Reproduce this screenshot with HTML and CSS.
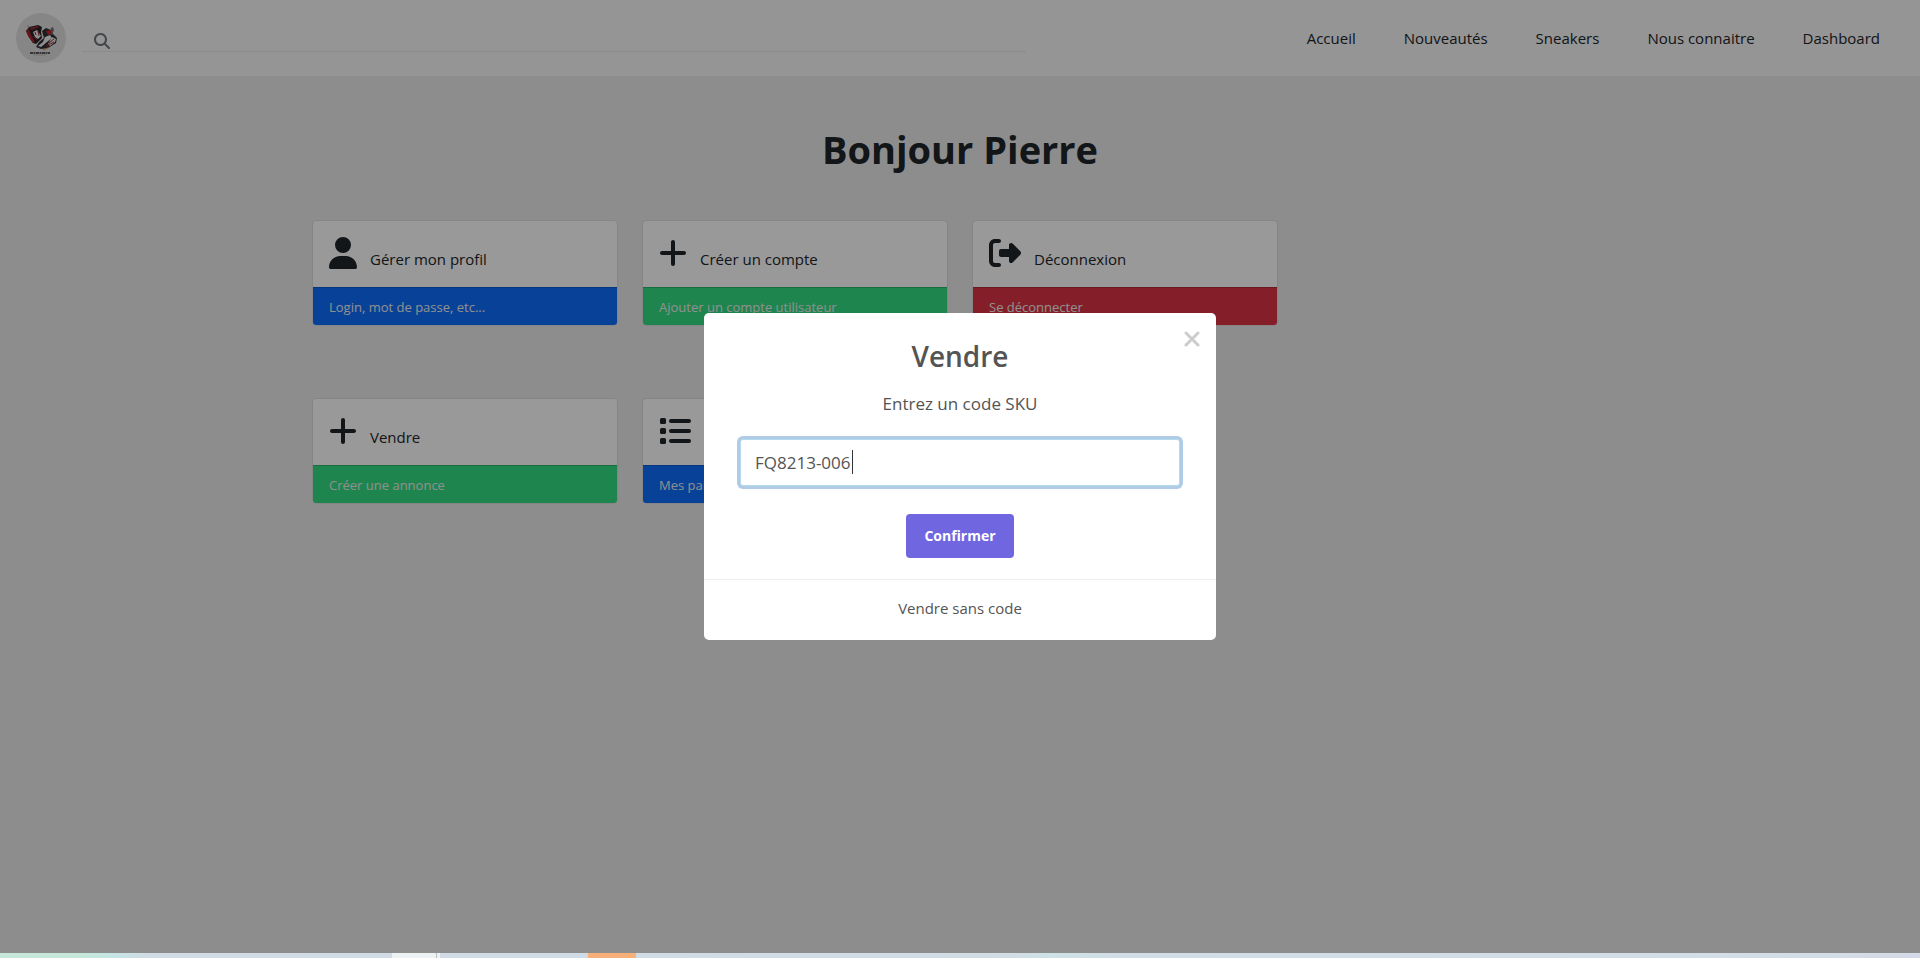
FILE: index.html
```html
<!DOCTYPE html>
<html lang="fr">
<head>
<meta charset="utf-8">
<meta name="viewport" content="width=device-width, initial-scale=1">
<title>Dashboard</title>
<link rel="stylesheet" href="styles.css">
</head>
<body>
<svg width="0" height="0" class="sprite" aria-hidden="true">
  <symbol id="i-user" viewBox="0 0 448 512"><path d="M224 256A128 128 0 1 0 224 0a128 128 0 1 0 0 256zm-45.700 48C79.800 304 0 383.800 0 482.300C0 498.700 13.300 512 29.700 512H418.300c16.400 0 29.700-13.300 29.700-29.700C448 383.800 368.200 304 269.700 304H178.300z"/></symbol>
  <symbol id="i-plus" viewBox="0 0 448 512"><path d="M256 80c0-17.700-14.300-32-32-32s-32 14.300-32 32V224H48c-17.700 0-32 14.300-32 32s14.300 32 32 32H192V432c0 17.700 14.300 32 32 32s32-14.300 32-32V288H400c17.700 0 32-14.300 32-32s-14.300-32-32-32H256V80z"/></symbol>
  <symbol id="i-exit" viewBox="0 0 512 512"><path d="M377.900 105.900L500.700 228.700c7.200 7.200 11.300 17.100 11.300 27.300s-4.100 20.100-11.300 27.300L377.900 406.100c-6.400 6.400-15 9.900-24 9.900c-18.700 0-33.900-15.200-33.900-33.900l0-62.100-128 0c-17.700 0-32-14.300-32-32l0-64c0-17.700 14.300-32 32-32l128 0 0-62.100c0-18.700 15.200-33.900 33.900-33.900c9 0 17.600 3.600 24 9.900zM160 96L96 96c-17.700 0-32 14.300-32 32l0 256c0 17.700 14.300 32 32 32l64 0c17.700 0 32 14.300 32 32s-14.300 32-32 32l-64 0c-53 0-96-43-96-96L0 128C0 75 43 32 96 32l64 0c17.700 0 32 14.300 32 32s-14.300 32-32 32z"/></symbol>
  <symbol id="i-list" viewBox="0 0 512 512"><rect x="16" y="48" width="96" height="96" rx="24"/><rect x="16" y="208" width="96" height="96" rx="24"/><rect x="16" y="368" width="96" height="96" rx="24"/><rect x="160" y="64" width="352" height="64" rx="32"/><rect x="160" y="224" width="352" height="64" rx="32"/><rect x="160" y="384" width="352" height="64" rx="32"/></symbol>
  <symbol id="i-search" viewBox="0 0 512 512"><path d="M416 208c0 45.900-14.900 88.300-40 122.700L502.600 457.400c12.500 12.500 12.500 32.800 0 45.300s-32.800 12.500-45.300 0L330.700 376c-34.400 25.200-76.800 40-122.700 40C93.100 416 0 322.900 0 208S93.100 0 208 0S416 93.100 416 208zM208 352a144 144 0 1 0 0-288 144 144 0 1 0 0 288z"/></symbol>
</svg>
<div class="screen">
  <div class="page">
    <header class="topbar">
      <a class="logo" href="#" aria-label="Sneakers">
        <svg viewBox="0 0 50 50" width="50" height="50" aria-hidden="true">
          <circle cx="25" cy="25" r="25" fill="#e0e0e0"/>
          <path d="M10 18l3-4 9-2 4 2-1 5 1 6-3 3-3 3-3-1-4-6z" fill="#2b2427"/>
          <path d="M10 18l3-2 2 6 4 7-2 1-5-7z" fill="#a3262e"/>
          <path d="M13 15l8-2 2 1-7 3z" fill="#8d3036"/>
          <path d="M17 19l4-2 4 6-3 3-3-2z" fill="#f0eeee"/>
          <path d="M19 19l1 3M22 18l1 5M17 23l4 4" stroke="#a3262e" fill="none"/>
          <path d="M26 18l4-3 5 2 2 4 4 4-1 5-8 5-7 1-5-2 3-5 5-4z" fill="#303034"/>
          <path d="M35 15l2-1 1 3-2 5-2-1z" fill="#707277"/>
          <path d="M30 18l5-1 1 3-4 2z" fill="#c4262e"/>
          <path d="M29 24l5-2 2 3-5 4-6 5-3-1 5-4z" fill="#f0eeee"/>
          <path d="M36 24l4 2-1 3-5 4-2-2z" fill="#e9e6e6"/>
          <path d="M33 30l5-4M30 33l8-4" stroke="#b32d34" fill="none"/>
          <path d="M27 37l7-3" stroke="#c38a4a" fill="none"/>
          <circle cx="12" cy="13" r=".6" fill="#80454a"/>
          <path d="M14 40h20" stroke="#303033" stroke-width="1.600" stroke-dasharray="3 .5 2 .5" fill="none"/>
          <path d="M17 42h13" stroke="#aaa" stroke-width=".6" fill="none"/>
        </svg>
      </a>
      <label class="search">
        <svg class="search-icon" aria-hidden="true"><use href="#i-search"/></svg>
        <input class="search-input" type="search" aria-label="Rechercher">
      </label>
      <nav class="nav">
        <a href="#">Accueil</a>
        <a href="#">Nouveautés</a>
        <a href="#">Sneakers</a>
        <a href="#">Nous connaitre</a>
        <a href="#">Dashboard</a>
      </nav>
    </header>
    <main class="container">
      <h1 class="greeting">Bonjour Pierre</h1>
      <div class="cards">
        <a class="card" href="#"><span class="card-body"><svg class="icon" aria-hidden="true"><use href="#i-user"/></svg><span>Gérer mon profil</span></span><span class="card-foot blue">Login, mot de passe, etc...</span></a>
        <a class="card" href="#"><span class="card-body"><svg class="icon" aria-hidden="true"><use href="#i-plus"/></svg><span>Créer un compte</span></span><span class="card-foot green">Ajouter un compte utilisateur</span></a>
        <a class="card" href="#"><span class="card-body"><svg class="icon icon-wide" aria-hidden="true"><use href="#i-exit"/></svg><span>Déconnexion</span></span><span class="card-foot red">Se déconnecter</span></a>
        <a class="card row-start" href="#"><span class="card-body"><svg class="icon" aria-hidden="true"><use href="#i-plus"/></svg><span>Vendre</span></span><span class="card-foot green">Créer une annonce</span></a>
        <a class="card" href="#"><span class="card-body"><svg class="icon icon-wide" aria-hidden="true"><use href="#i-list"/></svg></span><span class="card-foot blue">Mes paires</span></a>
      </div>
    </main>
    <div class="backdrop">
      <section class="modal" role="dialog" aria-modal="true" aria-labelledby="modal-title">
        <button class="close" type="button" aria-label="Fermer"><svg viewBox="0 0 16 16" width="16" height="16" aria-hidden="true"><path d="M2 2l12 12M14 2L2 14"/></svg></button>
        <h2 class="modal-title" id="modal-title">Vendre</h2>
        <label class="modal-label" for="sku">Entrez un code SKU</label>
        <div class="field">
          <input class="sku" id="sku" type="text" value="FQ8213-006">
          <span class="caret"></span>
        </div>
        <button class="confirm" type="button">Confirmer</button>
        <footer class="modal-foot"><a href="#">Vendre sans code</a></footer>
      </section>
    </div>
  </div>
  <div class="taskbar"><span class="task-light"></span><span class="task-orange"></span></div>
</div>
</body>
</html>
```
FILE: styles.css
```css
* { box-sizing: border-box; }

body {
  margin: 0;
  font-family: "Open Sans", "Noto Sans", sans-serif;
  font-size: 15px;
  line-height: 24px;
  color: #212529;
  background: #ebebeb;
}

a { color: inherit; text-decoration: none; }

.sprite { position: absolute; }

.screen {
  display: flex;
  flex-direction: column;
  min-height: 100vh;
}

.page {
  position: relative;
  flex: 1;
}

.topbar {
  display: flex;
  align-items: center;
  gap: 16px;
  padding: 13px 40px 13px 16px;
  background: #f8f8f8;
}

.logo { display: flex; }

.search {
  display: flex;
  align-items: center;
  flex: 0 1 944px;
  height: 24px;
  margin-top: 4px;
  padding: 2px 12px 0;
  gap: 12px;
  border-bottom: 1px solid #e8e8e8;
}

.search-icon { width: 16px; height: 16px; fill: #6c757d; }

.search-input {
  flex: 1;
  height: 20px;
  border: 0;
  outline: 0;
  background: transparent;
  font: inherit;
}

.nav {
  display: flex;
  gap: 48px;
  margin-left: auto;
}

.container {
  width: 100%;
  max-width: 1320px;
  margin: 0 auto;
  padding: 0 12px;
}

.greeting {
  margin: 0;
  padding: 49px 0 47px;
  font-size: 38px;
  font-weight: 700;
  line-height: 48px;
  text-align: center;
}

.cards {
  display: grid;
  grid-template-columns: repeat(4, 1fr);
  gap: 72px 24px;
}

.row-start { grid-column: 1; }

.card {
  display: block;
  border: 1px solid #dedede;
  border-radius: 4px;
  background: #fff;
  overflow: hidden;
}

.card-body {
  display: flex;
  gap: 13px;
  height: 66px;
  padding: 16px;
}

.card-body span { padding-top: 10px; }

.icon { width: 28px; height: 32px; fill: #212529; }

.icon-wide { width: 32px; }

.card-foot {
  display: block;
  padding: 7px 16px 6px;
  border-top: 1px solid rgba(0, 0, 0, 0.18);
  font-size: 13px;
  color: #f0f0f0;
}

.blue { background: #0d6efd; }
.green { background: #34de82; }
.red { background: #dc3545; }

.backdrop {
  position: absolute;
  inset: 0;
  display: flex;
  align-items: center;
  justify-content: center;
  background: rgba(0, 0, 0, 0.4);
}

.modal {
  position: relative;
  display: flex;
  flex-direction: column;
  align-items: center;
  width: 512px;
  border-radius: 5px;
  background: #fff;
  color: #545454;
}

.close {
  position: absolute;
  top: 18px;
  right: 16px;
  display: flex;
  padding: 0;
  border: 0;
  background: none;
}

.close path { stroke: #ccc; stroke-width: 3; stroke-linecap: round; fill: none; }

.modal-title {
  margin: 23px 0 0;
  font-size: 28px;
  font-weight: 600;
  line-height: 40px;
}

.modal-label {
  margin-top: 16px;
  font-size: 17px;
}

.field {
  position: relative;
  align-self: stretch;
  margin: 23px 36px 0;
}

.sku {
  display: block;
  width: 100%;
  height: 47px;
  padding: 0 14px;
  border: 1px solid #b4dbed;
  border-radius: 3px;
  outline: 0;
  box-shadow: 0 0 0 3px #b0cbe5;
  background: #fff;
  color: #545454;
  font-family: inherit;
  font-size: 17px;
}

.caret {
  position: absolute;
  top: 11px;
  left: 112px;
  width: 1px;
  height: 24px;
  background: #333;
}

.confirm {
  margin-top: 28px;
  padding: 10px 18px;
  border: 0;
  border-radius: 4px;
  background: #7066e0;
  color: #fff;
  font-family: inherit;
  font-size: 14px;
  font-weight: 700;
  line-height: 24px;
}

.modal-foot {
  align-self: stretch;
  margin-top: 21px;
  padding: 16px 0 20px;
  border-top: 1px solid #eee;
  text-align: center;
}

.taskbar {
  display: flex;
  height: 5px;
  padding-left: 392px;
  gap: 148px;
  background: linear-gradient(90deg, #c5e8da 0, #c5e8da 80px, #c4e6e4 110px, #d0dbe5 150px, #d0dde5 1020px, #cde3e6 1050px, #d1dde6 1110px, #d2dee7 1680px, #d4dae7 1920px);
}

.task-light { width: 48px; background: linear-gradient(90deg, #edf2f5 44px, #b8bec2 44px, #b8bec2 45px, #edf2f5 45px); }
.task-orange { width: 48px; background: #f8b07a; }
```
